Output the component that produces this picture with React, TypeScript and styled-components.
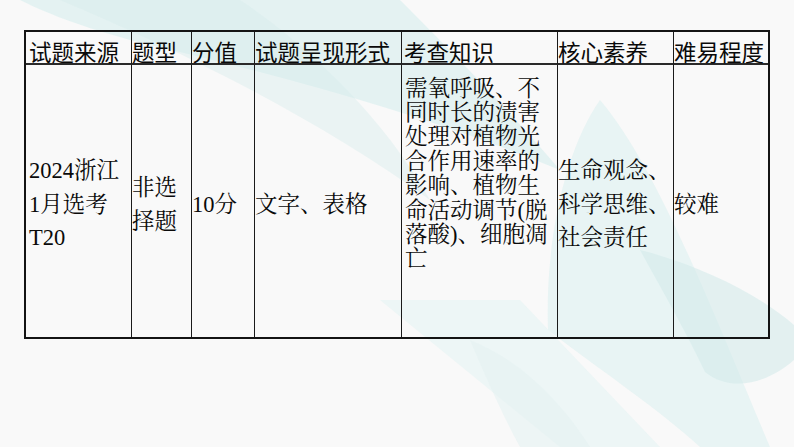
import React from "react";
import styled, { createGlobalStyle } from "styled-components";

const Global = createGlobalStyle`
  html, body { margin: 0; padding: 0; background: #f9f9f9; }
  * { box-sizing: border-box; }
`;

const Page = styled.div`
  position: relative;
  width: 794px;
  height: 447px;
  overflow: hidden;
  background: #f9f9f9;
  padding: 30px 0 0 24px;
`;

const Backdrop = styled.svg`
  position: absolute;
  left: 0;
  top: 0;
  width: 794px;
  height: 447px;
  z-index: 0;
`;

const Grid = styled.div`
  position: relative;
  z-index: 1;
  display: grid;
  width: fit-content;
  grid-template-columns: 106px 60px 63px 147px 156px 116px 94px;
  grid-template-rows: 33px 272px;
  border: 2px solid #141414;
  color: #0a0a0a;
`;

const HeadCell = styled.div<{ $pad?: number; $last?: boolean }>`
  border-right: ${(p) => (p.$last ? "none" : "1px solid #1a1a1a")};
  border-bottom: 2px solid #2a2a2a;
  padding: 6.5px 0 0 ${(p) => p.$pad ?? 0}px;
  font-family: "Noto Sans CJK SC", "Noto Sans", sans-serif;
  font-size: 22.5px;
  line-height: 25px;
  white-space: nowrap;
`;

const BodyCell = styled.div<{
  $pad?: number;
  $last?: boolean;
  $top?: boolean;
  $lh?: number;
}>`
  display: flex;
  align-items: ${(p) => (p.$top ? "flex-start" : "center")};
  border-right: ${(p) => (p.$last ? "none" : "1px solid #1a1a1a")};
  padding: ${(p) => (p.$top ? "11.5px 3px 0" : "7px 0 0")};
  padding-left: ${(p) => p.$pad ?? 0}px;
  font-family: "Liberation Serif", "Noto Serif CJK SC", "Noto Sans CJK SC", serif;
  font-size: 22.5px;
  line-height: ${(p) => p.$lh ?? 33.5}px;
`;

const CellText = styled.div`
  width: 100%;
`;

const heads = ["试题来源", "题型", "分值", "试题呈现形式", "考查知识", "核心素养", "难易程度"];
const headPads = [3, 0, 0, 0, 2, 0, 0];

export default function App() {
  return (
    <>
      <Global />
      <Page>
        <Backdrop viewBox="0 0 794 447" aria-hidden="true">
          <path d="M20 0 L400 0 C440 40 500 100 560 170 C440 120 300 80 150 45 C90 30 50 15 20 0 Z" fill="#dcefef" opacity="0.7" />
          <path d="M60 0 L240 0 C300 40 380 110 430 200 C320 120 180 50 60 0 Z" fill="#d4eaea" opacity="0.4" />
          <path d="M600 100 C565 150 545 240 548 330 C600 370 660 410 700 447 L770 447 C720 330 660 170 600 100 Z" fill="#e2f1f1" opacity="0.75" />
          <path d="M640 250 C700 265 760 295 794 325 L794 360 C765 385 730 392 705 372 C685 330 662 290 640 250 Z" fill="#d2eaea" opacity="0.55" />
          <path d="M380 300 L520 300 L660 447 L560 447 Z" fill="#e8f4f4" opacity="0.75" />
          <path d="M470 340 C520 360 560 400 590 447 L520 447 C500 410 485 375 470 340 Z" fill="#e4f2f2" opacity="0.6" />
        </Backdrop>
        <Grid>
          {heads.map((h, i) => (
            <HeadCell key={h} $pad={headPads[i]} $last={i === heads.length - 1}>
              {h}
            </HeadCell>
          ))}
          <BodyCell $pad={3}>
            <CellText>
              2024浙江
              <br />
              1月选考
              <br />
              T20
            </CellText>
          </BodyCell>
          <BodyCell $pad={0}>
            <CellText>非选择题</CellText>
          </BodyCell>
          <BodyCell $pad={0}>
            <CellText>10分</CellText>
          </BodyCell>
          <BodyCell $pad={0}>
            <CellText>文字、表格</CellText>
          </BodyCell>
          <BodyCell $top $pad={3} $lh={24.4}>
            <CellText>
              需氧呼吸、不同时长的渍害处理对植物光合作用速率的影响、植物生命活动调节(脱落酸)、细胞凋亡
            </CellText>
          </BodyCell>
          <BodyCell $pad={0}>
            <CellText>生命观念、科学思维、社会责任</CellText>
          </BodyCell>
          <BodyCell $pad={0} $last>
            <CellText>较难</CellText>
          </BodyCell>
        </Grid>
      </Page>
    </>
  );
}
